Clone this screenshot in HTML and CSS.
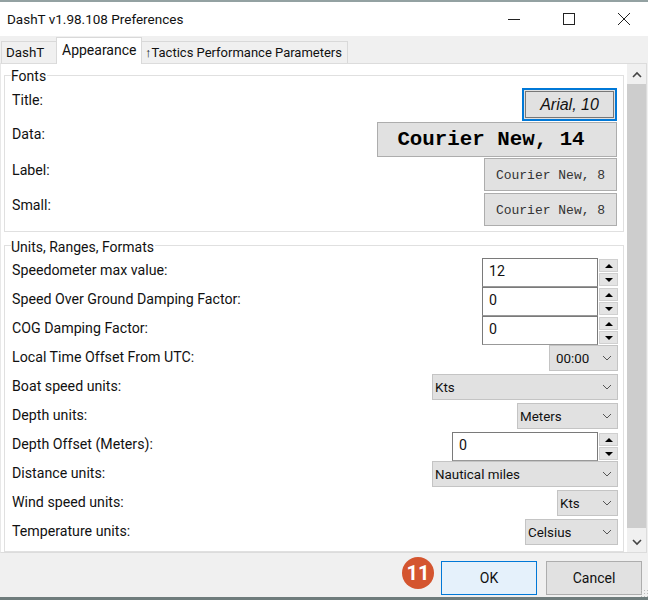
FILE: index.html
```html
<!DOCTYPE html>
<html lang="en">
<head>
    <meta charset="UTF-8">
    <title>DashT v1.98.108 Preferences</title>
    <link rel="stylesheet" href="styles.css">
</head>
<body>
    <div class="dialog">
        <header class="titlebar">
            <div class="title">DashT v1.98.108 Preferences</div>
            <div class="win-buttons">
                <svg width="14" height="14" viewBox="0 0 14 14"><path d="M1 7.5H13" stroke="#222" fill="none"/></svg>
                <svg width="14" height="14" viewBox="0 0 14 14"><rect x="1.5" y="1.5" width="11" height="11" stroke="#222" fill="none"/></svg>
                <svg width="14" height="14" viewBox="0 0 14 14"><path d="M1 1L13 13M13 1L1 13" stroke="#222" fill="none"/></svg>
            </div>
        </header>

        <div class="tabs">
            <div class="tab">DashT</div>
            <div class="tab active">Appearance</div>
            <div class="tab">↑Tactics Performance Parameters</div>
        </div>

        <main class="page">
            <div class="scroll-content">
                <fieldset class="group fonts">
                    <legend>Fonts</legend>
                    <div class="font-row">
                        <span class="row-label">Title:</span>
                        <button class="font-btn focused"><span class="arial">Arial, 10</span></button>
                    </div>
                    <div class="font-row">
                        <span class="row-label">Data:</span>
                        <button class="font-btn data"><span class="courier-big">Courier New, 14</span></button>
                    </div>
                    <div class="font-row gap-after">
                        <span class="row-label">Label:</span>
                        <button class="font-btn small"><span class="courier">Courier New, 8</span></button>
                    </div>
                    <div class="font-row">
                        <span class="row-label">Small:</span>
                        <button class="font-btn small"><span class="courier">Courier New, 8</span></button>
                    </div>
                </fieldset>

                <fieldset class="group units">
                    <legend>Units, Ranges, Formats</legend>
                    <div class="row">
                        <span class="row-label">Speedometer max value:</span>
                        <div class="spin w136"><div class="spin-input">12</div><div class="spin-btns"><div class="spin-btn up"></div><div class="spin-btn down"></div></div></div>
                    </div>
                    <div class="row">
                        <span class="row-label">Speed Over Ground Damping Factor:</span>
                        <div class="spin w136"><div class="spin-input">0</div><div class="spin-btns"><div class="spin-btn up"></div><div class="spin-btn down"></div></div></div>
                    </div>
                    <div class="row">
                        <span class="row-label">COG Damping Factor:</span>
                        <div class="spin w136"><div class="spin-input">0</div><div class="spin-btns"><div class="spin-btn up"></div><div class="spin-btn down"></div></div></div>
                    </div>
                    <div class="row">
                        <span class="row-label">Local Time Offset From UTC:</span>
                        <div class="combo w69"><span>00:00</span><svg class="chev" width="10" height="6" viewBox="0 0 10 6"><path d="M1 1L5 5L9 1" stroke="#555" fill="none"/></svg></div>
                    </div>
                    <div class="row">
                        <span class="row-label">Boat speed units:</span>
                        <div class="combo w186"><span>Kts</span><svg class="chev" width="10" height="6" viewBox="0 0 10 6"><path d="M1 1L5 5L9 1" stroke="#555" fill="none"/></svg></div>
                    </div>
                    <div class="row">
                        <span class="row-label">Depth units:</span>
                        <div class="combo w101"><span>Meters</span><svg class="chev" width="10" height="6" viewBox="0 0 10 6"><path d="M1 1L5 5L9 1" stroke="#555" fill="none"/></svg></div>
                    </div>
                    <div class="row">
                        <span class="row-label">Depth Offset (Meters):</span>
                        <div class="spin w166"><div class="spin-input">0</div><div class="spin-btns"><div class="spin-btn up"></div><div class="spin-btn down"></div></div></div>
                    </div>
                    <div class="row">
                        <span class="row-label">Distance units:</span>
                        <div class="combo w186"><span>Nautical miles</span><svg class="chev" width="10" height="6" viewBox="0 0 10 6"><path d="M1 1L5 5L9 1" stroke="#555" fill="none"/></svg></div>
                    </div>
                    <div class="row">
                        <span class="row-label">Wind speed units:</span>
                        <div class="combo w61"><span>Kts</span><svg class="chev" width="10" height="6" viewBox="0 0 10 6"><path d="M1 1L5 5L9 1" stroke="#555" fill="none"/></svg></div>
                    </div>
                    <div class="row">
                        <span class="row-label">Temperature units:</span>
                        <div class="combo w93"><span>Celsius</span><svg class="chev" width="10" height="6" viewBox="0 0 10 6"><path d="M1 1L5 5L9 1" stroke="#555" fill="none"/></svg></div>
                    </div>
                </fieldset>
            </div>

            <div class="scrollbar">
                <div class="scroll-arrow"><svg width="10" height="7" viewBox="0 0 10 7"><path d="M1 6L5 2L9 6" stroke="#444" stroke-width="1.6" fill="none"/></svg></div>
                <div class="scroll-thumb"></div>
                <div class="scroll-arrow"><svg width="10" height="7" viewBox="0 0 10 7"><path d="M1 1L5 5L9 1" stroke="#444" stroke-width="1.6" fill="none"/></svg></div>
            </div>
        </main>

        <footer class="footer">
            <div class="badge">11</div>
            <button class="btn ok">OK</button>
            <button class="btn">Cancel</button>
            <div class="grip"></div>
        </footer>
    </div>
</body>
</html>
```

FILE: styles.css
```css
html, body {
    margin: 0;
    padding: 0;
}

body {
    font-family: Roboto, "Open Sans", sans-serif;
    font-size: 14.2px;
    color: #111;
    background-color: #f0f0f0;
    width: 648px;
    height: 600px;
    overflow: hidden;
}

.dialog {
    display: flex;
    flex-direction: column;
    height: 595px;
    border-top: 2px solid #93a1a2;
    border-bottom: 3px solid #6f7c7c;
}

.titlebar {
    display: flex;
    justify-content: space-between;
    align-items: center;
    height: 34px;
    padding: 0 0 0 7px;
    background-color: #fff;
    flex: none;
}

.title {
    font-size: 13.5px;
}

.win-buttons {
    display: flex;
    gap: 41px;
    padding-right: 17px;
    align-items: center;
}

/* tabs */
.tabs {
    display: flex;
    align-items: flex-end;
    height: 27px;
    padding-left: 1px;
    background-color: #f0f0f0;
    flex: none;
    position: relative;
}

.tab {
    height: 22px;
    line-height: 21px;
    padding: 0 4px;
    font-size: 13.4px;
    background-color: #f0f0f0;
    border: 1px solid #d9d9d9;
    border-bottom: none;
    margin-left: -1px;
    box-sizing: border-box;
    white-space: nowrap;
}

.tab:first-child {
    width: 56px;
    margin-left: 0;
}

.tab:nth-child(3) {
    width: 207px;
    font-size: 13px;
    padding: 0 0 0 3px;
}

.tab.active {
    height: 27px;
    width: 86px;
    line-height: 25px;
    font-size: 14px;
    padding: 0 0 0 5px;
    background-color: #fff;
    margin-bottom: -1px;
    position: relative;
    z-index: 1;
}

/* main page */
.page {
    display: flex;
    flex: 1;
    min-height: 0;
    background-color: #fff;
    border-top: 1px solid #dcdcdc;
    border-bottom: 1px solid #dcdcdc;
    border-right: 1px solid #dcdcdc;
    border-left: 1px solid #e8e8e8;
    margin: 0 1px 0 0;
}

.scroll-content {
    flex: 1;
    padding: 0 2px 0 3px;
    min-width: 0;
}

.group {
    border: 1px solid #e0e0e0;
    margin: 0;
    padding: 0;
    min-width: 0;
    box-sizing: border-box;
}

.group legend {
    margin-left: -1px;
    padding: 1px 1px 0 0;
    line-height: 18px;
    font-size: 14px;
}

.fonts {
    margin-top: 2px;
    height: 166px;
    padding: 3px 6px 0 7px;
}

.units {
    margin-top: 3px;
    height: 317px;
    padding: 2px 5px 0 7px;
}

.units legend {
    padding-top: 3px;
}

.font-row {
    display: flex;
    justify-content: space-between;
    align-items: flex-start;
    margin-bottom: 1px;
}

.font-row.gap-after {
    margin-bottom: 2px;
}

.font-row .row-label {
    line-height: 23px;
    padding-top: 1px;
}

.font-btn {
    font-family: inherit;
    background-color: #e1e1e1;
    border: 1px solid #adadad;
    padding: 0;
    display: flex;
    align-items: center;
    justify-content: center;
    box-sizing: border-box;
    margin: 0;
}

.font-btn.focused {
    width: 95px;
    height: 33px;
    border: 2px solid #0078d7;
    box-shadow: inset 0 0 0 1px #e1e1e1, inset 0 0 0 2px #777;
}

.font-btn.data {
    width: 240px;
    height: 35px;
    padding-right: 12px;
}

.font-btn.small {
    width: 133px;
    height: 33px;
    padding-top: 1px;
}

.arial {
    font-family: "Liberation Sans", Arial, sans-serif;
    font-style: italic;
    font-size: 16px;
    color: #111;
}

.courier-big {
    font-family: "Liberation Mono", "Courier New", monospace;
    font-weight: bold;
    font-size: 20.8px;
    color: #000;
}

.courier {
    font-family: "Liberation Mono", "Courier New", monospace;
    font-size: 13px;
    color: #333;
}

/* unit rows */
.row {
    display: flex;
    justify-content: space-between;
    align-items: flex-start;
    height: 29px;
}

.row .row-label {
    line-height: 24px;
}

.spin {
    display: flex;
    height: 29px;
    box-sizing: border-box;
}

.w136 { width: 136px; }
.w166 { width: 166px; }
.w69 { width: 69px; }
.w186 { width: 186px; }
.w101 { width: 101px; }
.w61 { width: 61px; }
.w93 { width: 93px; }

.spin-input {
    flex: 1;
    background-color: #fff;
    border: 1px solid #7a7a7a;
    border-bottom-color: #999;
    padding-left: 6px;
    line-height: 25px;
    box-sizing: border-box;
}

.spin-btns {
    display: flex;
    flex-direction: column;
    width: 19px;
    margin-left: 1px;
    gap: 1px;
    flex: none;
    padding: 1px 0;
    box-sizing: border-box;
}

.spin-btn {
    flex: 1;
    background-color: #e4e4e4;
    border: 1px solid #d0d0d0;
    box-sizing: border-box;
    display: flex;
    align-items: center;
    justify-content: center;
}

.spin-btn::after {
    content: "";
    border-left: 4px solid transparent;
    border-right: 4px solid transparent;
}

.spin-btn.up::after {
    border-bottom: 4px solid #000;
}

.spin-btn.down::after {
    border-top: 4px solid #000;
}

.combo {
    display: flex;
    align-items: center;
    justify-content: space-between;
    height: 26px;
    font-size: 13.4px;
    background-color: #e1e1e1;
    border: 1px solid #c4c4c4;
    box-sizing: border-box;
    padding: 0 5px 0 2px;
    white-space: nowrap;
}

.combo.w69 {
    padding-left: 6px;
}

.chev {
    flex: none;
}

/* scrollbar */
.scrollbar {
    display: flex;
    flex-direction: column;
    width: 19px;
    margin-left: 1px;
    background-color: #f0f0f0;
    flex: none;
}

.scroll-arrow {
    display: flex;
    align-items: center;
    justify-content: center;
    height: 20px;
    flex: none;
}

.scroll-thumb {
    flex: 1;
    background-color: #cdcdcd;
    margin-bottom: 4px;
}

/* footer */
.footer {
    display: flex;
    justify-content: flex-end;
    align-items: center;
    gap: 9px;
    height: 44px;
    padding: 6px 6px 0 0;
    box-sizing: border-box;
    background-color: #f0f0f0;
    flex: none;
    position: relative;
}

.btn {
    font-family: inherit;
    font-size: 14px;
    color: #111;
    width: 96px;
    height: 34px;
    background-color: #e1e1e1;
    border: 1px solid #adadad;
    padding: 0;
    margin: 0;
}

.btn.ok {
    background-color: #e5f1fb;
    border-color: #0078d7;
}

.badge {
    position: absolute;
    left: 402px;
    top: 4px;
    width: 32px;
    height: 32px;
    border-radius: 50%;
    background-color: #d4552f;
    color: #fff;
    font-weight: bold;
    font-size: 20px;
    line-height: 32px;
    text-align: center;
}

.grip {
    position: absolute;
    right: 0;
    bottom: 0;
    width: 8px;
    height: 8px;
    background-image: radial-gradient(#bbb 1px, transparent 1px);
    background-size: 3px 3px;
}
```
